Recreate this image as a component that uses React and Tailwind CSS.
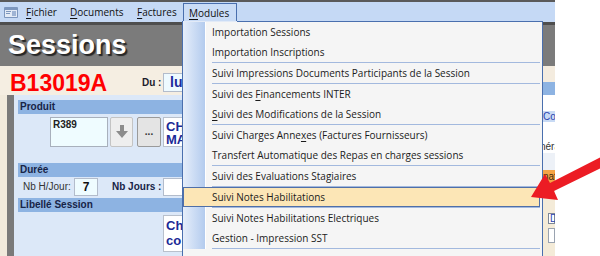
import React from "react";

const gutter = "w-[23px] shrink-0 bg-linear-to-r from-[#e6eefa] to-[#b3cbee] border-r border-white";

function Item({ children, active }) {
  if (active) {
    return (
      <div className="h-[20px] mr-[2px] bg-[#fce6b6] border border-[#4f6fa8] pl-[28px] leading-[18px] whitespace-nowrap">
        {children}
      </div>
    );
  }
  return (
    <div className="flex h-[20px]">
      <div className={gutter} />
      <div className="pl-[6px] leading-[20px] whitespace-nowrap">{children}</div>
    </div>
  );
}

function Sep() {
  return (
    <div className="flex h-[1px]">
      <div className={gutter} />
      <div className="flex-1 ml-[6px] mr-[2px] bg-[#a3b9de]" />
    </div>
  );
}

function U({ children }) {
  return <span className="underline underline-offset-2">{children}</span>;
}

export default function App() {
  return (
    <div className="w-[600px] h-[256px] bg-white relative overflow-hidden font-['Liberation_Sans',Arial,sans-serif]">
      <div className="w-[555px] h-full flex flex-col">
        <div className="h-[2px] bg-[#5a5a5a]" />

        {/* menu bar */}
        <div className="h-[20px] bg-[#c5d9f5] flex items-start font-['Open_Sans',sans-serif] text-[10px] text-[#111]">
          <svg width="14" height="11" viewBox="0 0 14 11" className="ml-[4px] mt-[5px]">
            <rect x="0" y="0" width="14" height="11" rx="1" fill="#7d97be" />
            <rect x="1" y="3" width="12" height="7" fill="#e3ebf6" />
            <rect x="2" y="4" width="5" height="1" fill="#7d97be" />
            <rect x="2" y="6" width="4" height="1" fill="#7d97be" />
            <rect x="8" y="4" width="4" height="5" fill="#9fb4d4" />
          </svg>
          <div className="w-[44px] ml-[1px] pl-[7px] leading-[20px]">
            <U>F</U>ichier
          </div>
          <div className="w-[67px] pl-[7px] leading-[20px]">
            <U>D</U>ocuments
          </div>
          <div className="w-[53px] pl-[7px] leading-[20px]">
            <U>F</U>actures
          </div>
          <div className="w-[54px] h-[19px] mt-[1px] border-t border-l border-r border-[#4a6fae] bg-[#cadcf6] pl-[5px] leading-[18px]">
            <U>M</U>odules
          </div>
        </div>

        {/* title */}
        <div className="h-[44px] bg-[#7b7b7b] border-t-[3px] border-[#4e4e4e] pl-[8px] flex items-center">
          <span className="text-[27px] font-bold text-white leading-none [text-shadow:2px_2px_1px_#262626]">
            Sessions
          </span>
        </div>

        <div className="flex flex-1">
          <div className="w-[543px] flex flex-col">
            {/* code row */}
            <div className="h-[29px] bg-[#f5eee2] flex items-start">
              <div className="w-[132px] ml-[10px] mt-[6px] text-[23px] font-bold leading-none text-[#ff0000]">
                B13019A
              </div>
              <div className="w-[21px] mt-[12px] text-[10px] font-bold leading-none text-[#1c1c2c]">
                Du :
              </div>
              <div className="w-[120px] h-[19px] mt-[7px] bg-[#eefaff] border border-[#b3bccb] pl-[6px] text-[14px] font-bold leading-[17px] text-[#1c2a9c]">
                lu
              </div>
            </div>

            {/* body */}
            <div className="flex flex-1">
              <div className="w-[7px] bg-[#f1eadc]" />
              <div className="w-[7px] bg-[#7a7a7a]" />
              <div className="flex-1 bg-[#dce8f8] pl-[4px] pt-[5px] flex flex-col text-[#172447]">
                <div className="h-[14px] bg-[#8db3e2] pl-[2px] text-[10px] font-bold leading-[14px]">
                  Produit
                </div>
                <div className="flex h-[30px] mt-[3px]">
                  <div className="w-[58px] ml-[32px] bg-[#effcff] border border-[#a8b0bc] pl-[2px] pt-[2px] text-[10px] font-bold leading-none text-[#222]">
                    R389
                  </div>
                  <div className="w-[23px] ml-[2px] bg-[#eeeeee] border border-[#c4c4c4] rounded-[2px] flex items-center justify-center">
                    <svg width="12" height="14" viewBox="0 0 12 14">
                      <polygon points="4,0 8,0 8,6 12,6 6,13 0,6 4,6" fill="#8c8c8c" />
                    </svg>
                  </div>
                  <div className="w-[24px] ml-[4px] bg-[#e4e4e4] border border-[#9a9a9a] rounded-[2px] flex items-center justify-center text-[10px] font-bold leading-none text-[#333]">
                    ...
                  </div>
                  <div className="flex-1 ml-[2px] bg-white border border-[#b8c0cc] pl-[2px] pt-[2px] text-[13px] font-bold leading-[13px] text-[#1b2a96]">
                    CH
                    <br />
                    MA
                  </div>
                </div>
                <div className="h-[14px] mt-[16px] bg-[#8db3e2] pl-[2px] text-[10px] font-bold leading-[14px]">
                  Durée
                </div>
                <div className="flex h-[20px] items-start">
                  <div className="w-[51px] ml-[5px] mt-[5px] text-[10px] leading-none text-[#333]">
                    Nb H/Jour:
                  </div>
                  <div className="w-[24px] h-[18px] mt-[1px] bg-[#effcff] border border-[#b3bccb] text-center text-[12px] font-bold leading-[16px] text-[#111]">
                    7
                  </div>
                  <div className="w-[51px] ml-[14px] mt-[5px] text-[10px] font-bold leading-none">
                    Nb Jours :
                  </div>
                  <div className="flex-1 h-[18px] mt-[1px] bg-white border border-[#b3bccb]" />
                </div>
                <div className="h-[14px] mt-[1px] bg-[#8db3e2] pl-[2px] text-[10px] font-bold leading-[14px]">
                  Libellé Session
                </div>
                <div className="h-[37px] mt-[3px] ml-[145px] bg-white border border-[#b8c0cc] pl-[2px] pt-[2px] text-[13px] font-bold leading-[15px] text-[#1b2a96]">
                  Ch
                  <br />
                  co
                </div>
              </div>
            </div>
          </div>

          {/* right strip, mostly under the menu */}
          <div className="w-[12px] flex flex-col overflow-hidden text-[10px] leading-none">
            <div className="h-[16px] bg-[#f4ecdf]" />
            <div className="h-[13px] bg-[#8db3e2]" />
            <div className="h-[16px] bg-white" />
            <div className="h-[11px] bg-[#c8daf4] text-[#2a44b0] whitespace-nowrap pt-[1px]">Cor</div>
            <div className="h-[18px] bg-white" />
            <div className="h-[13px] bg-white text-[#333] whitespace-nowrap -ml-[3px] pt-[2px]">néra</div>
            <div className="h-[17px] bg-[#edf1f7]" />
            <div className="h-[14px] bg-[#f5a546] text-[#3a2a10] whitespace-nowrap pt-[2px]">nat</div>
            <div className="flex-1 bg-[#f4ebd8] flex flex-col pl-[5px] pt-[29px] gap-[4px]">
              <div className="h-[11px] bg-white border border-[#7d8797] text-[#2a44b0] pl-[1px]">D</div>
              <div className="h-[15px] bg-white border border-[#9aa3b0]" />
            </div>
          </div>
        </div>
      </div>

      {/* Modules dropdown */}
      <div className="absolute left-[182px] top-[21px] w-[361px] h-[240px] bg-[#f5f5f5] border-l border-r border-t border-[#4a6fae] font-['Open_Sans',sans-serif] text-[10px] text-[#1b1b1b]">
        <div className="absolute -top-[1px] left-0 w-[54px] h-[1px] bg-[#e2eaf7]" />
        <Item>Importation Sessions</Item>
        <Item>Importation Inscriptions</Item>
        <Sep />
        <Item>Suivi Impressions Documents Participants de la Session</Item>
        <Sep />
        <Item>
          Suivi des <U>F</U>inancements INTER
        </Item>
        <Item>
          <U>S</U>uivi des Modifications de la Session
        </Item>
        <Sep />
        <Item>
          Suivi Charges Anne<U>x</U>es (Factures Fournisseurs)
        </Item>
        <Item>Transfert Automatique des Repas en charges sessions</Item>
        <Sep />
        <Item>Suivi des Evaluations Stagiaires</Item>
        <Sep />
        <Item active>Suivi Notes Habilitations</Item>
        <Sep />
        <Item>Suivi Notes Habilitations Electriques</Item>
        <Item>Gestion - Impression SST</Item>
        <Sep />
      </div>

      {/* red arrow */}
      <svg className="absolute left-[520px] top-[150px]" width="80" height="60" viewBox="0 0 80 60">
        <polygon points="11,47 25,24 30,33 81,7 85,16 34,41 38,50" fill="#ec1c24" />
      </svg>
    </div>
  );
}
